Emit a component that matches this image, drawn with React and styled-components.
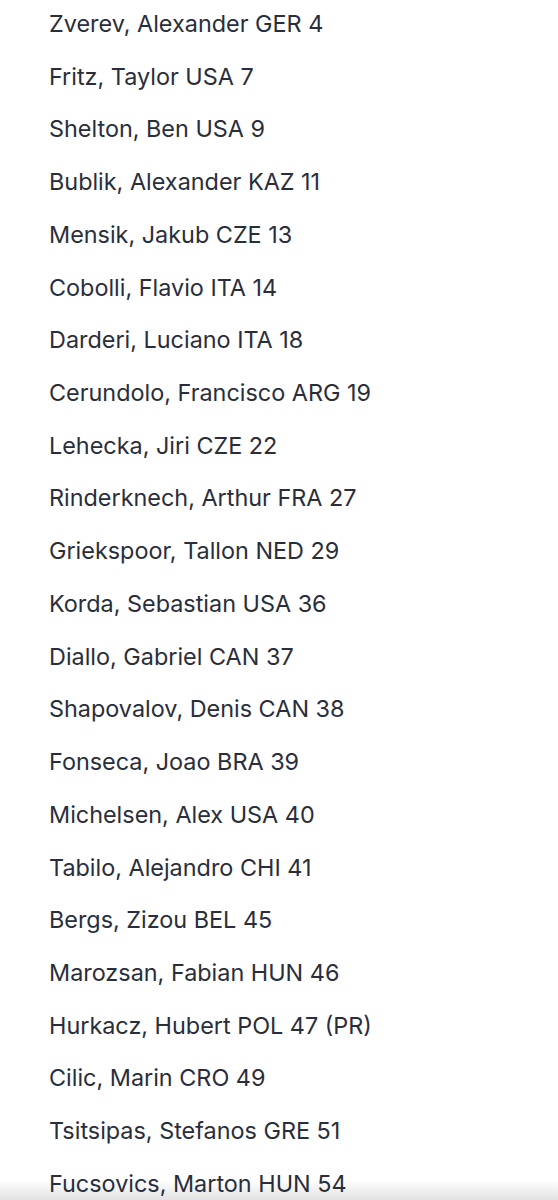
import React from "react";
import styled, { createGlobalStyle } from "styled-components";

const Global = createGlobalStyle`
  html, body { margin: 0; padding: 0; background: #ffffff; }
  body { font-family: Inter, "Noto Sans", "Liberation Sans", sans-serif; }
`;

const Page = styled.div`
  position: relative;
  height: 1200px;
  overflow: hidden;
  background: #ffffff;
`;

const List = styled.ul`
  position: relative;
  z-index: 1;
  list-style: none;
  margin: 0;
  padding: 0 0 0 49px;
  display: flex;
  flex-direction: column;
`;

const Item = styled.li`
  box-sizing: border-box;
  height: 52.72px;
  padding-bottom: 4px;
  line-height: 48.7px;
  font-size: 23.4px;
  color: #2a2e3b;
  white-space: nowrap;
`;

const BottomFade = styled.div`
  position: absolute;
  z-index: 0;
  left: 0;
  right: 0;
  bottom: 0;
  height: 20px;
  background: linear-gradient(to bottom, rgba(235,235,235,0), rgba(226,226,226,1));
  pointer-events: none;
`;

const players = [
  "Zverev, Alexander GER 4",
  "Fritz, Taylor USA 7",
  "Shelton, Ben USA 9",
  "Bublik, Alexander KAZ 11",
  "Mensik, Jakub CZE 13",
  "Cobolli, Flavio ITA 14",
  "Darderi, Luciano ITA 18",
  "Cerundolo, Francisco ARG 19",
  "Lehecka, Jiri CZE 22",
  "Rinderknech, Arthur FRA 27",
  "Griekspoor, Tallon NED 29",
  "Korda, Sebastian USA 36",
  "Diallo, Gabriel CAN 37",
  "Shapovalov, Denis CAN 38",
  "Fonseca, Joao BRA 39",
  "Michelsen, Alex USA 40",
  "Tabilo, Alejandro CHI 41",
  "Bergs, Zizou BEL 45",
  "Marozsan, Fabian HUN 46",
  "Hurkacz, Hubert POL 47 (PR)",
  "Cilic, Marin CRO 49",
  "Tsitsipas, Stefanos GRE 51",
  "Fucsovics, Marton HUN 54",
];

export default function App() {
  return (
    <Page>
      <Global />
      <BottomFade />
      <List>
        {players.map((p) => (
          <Item key={p}>{p}</Item>
        ))}
      </List>
    </Page>
  );
}
